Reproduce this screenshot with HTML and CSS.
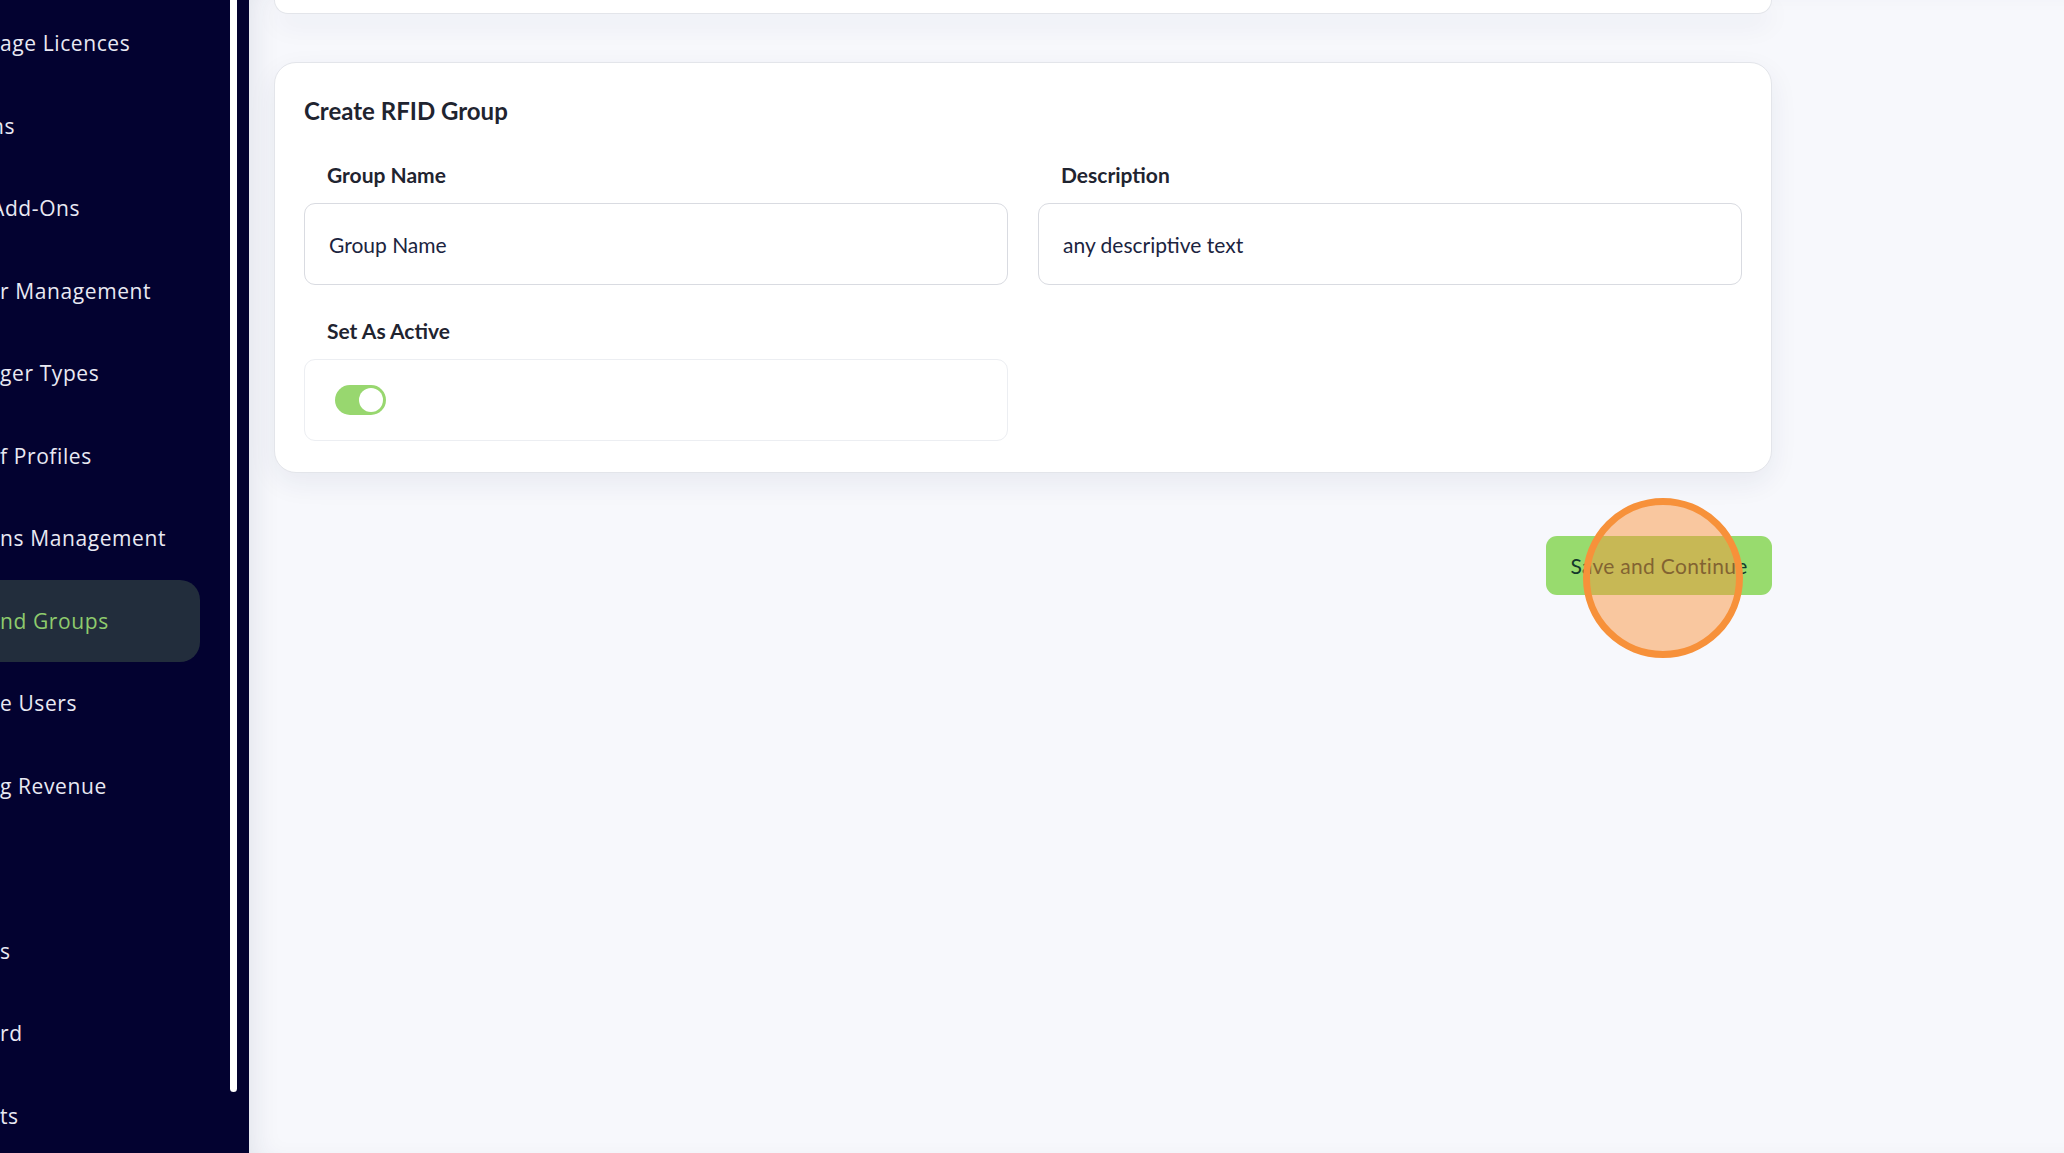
FILE: index.html
```html
<!DOCTYPE html>
<html lang="en">
<head>
<meta charset="utf-8">
<title>Create RFID Group</title>
<link rel="stylesheet" href="styles.css">
</head>
<body>
<div class="app">
  <aside class="sidebar">
    <nav class="nav">
      <a class="nav-item"><span class="nav-label">age Licences</span></a>
      <a class="nav-item"><span class="nav-label shift">ns</span></a>
      <a class="nav-item"><span class="nav-label shift">Add-Ons</span></a>
      <a class="nav-item"><span class="nav-label">r Management</span></a>
      <a class="nav-item"><span class="nav-label">ger Types</span></a>
      <a class="nav-item"><span class="nav-label">f Profiles</span></a>
      <a class="nav-item"><span class="nav-label">ns Management</span></a>
      <a class="nav-item active"><span class="nav-label">nd Groups</span></a>
      <a class="nav-item"><span class="nav-label">e Users</span></a>
      <a class="nav-item"><span class="nav-label">g Revenue</span></a>
      <a class="nav-item"><span class="nav-label"></span></a>
      <a class="nav-item"><span class="nav-label">s</span></a>
      <a class="nav-item"><span class="nav-label">rd</span></a>
      <a class="nav-item"><span class="nav-label">ts</span></a>
    </nav>
    <div class="scroll-track"><div class="scroll-thumb"></div></div>
  </aside>

  <main class="main">
    <div class="card card-top"></div>

    <section class="card form-card">
      <h2 class="card-title">Create RFID Group</h2>
      <div class="form-grid">
        <div class="field">
          <label class="field-label">Group Name</label>
          <div class="input">Group Name</div>
        </div>
        <div class="field">
          <label class="field-label">Description</label>
          <div class="input">any descriptive text</div>
        </div>
        <div class="field">
          <label class="field-label">Set As Active</label>
          <div class="input input-soft">
            <span class="toggle"><span class="knob"></span></span>
          </div>
        </div>
      </div>
    </section>

    <div class="actions">
      <div class="btn-wrap">
        <button class="btn-primary">Save and Continue</button>
        <span class="click-marker"></span>
      </div>
    </div>
  </main>
</div>
</body>
</html>
```

FILE: styles.css
```css
* { box-sizing: border-box; }

html, body {
  margin: 0;
  padding: 0;
  height: 100%;
}

body {
  font-family: "Lato", "Open Sans", sans-serif;
  background: #f7f8fc;
  overflow: hidden;
}

.app {
  display: flex;
  height: 1153px;
}

/* Sidebar */
.sidebar {
  width: 249px;
  flex: 0 0 249px;
  background: #030230;
  display: flex;
  overflow: hidden;
}

.nav {
  flex: 1;
  display: flex;
  flex-direction: column;
  padding-top: 2px;
  overflow: hidden;
}

.nav-item {
  height: 82.5px;
  flex: 0 0 82.5px;
  width: 200px;
  display: flex;
  align-items: center;
  color: #e9e9f3;
  font-family: "Open Sans", sans-serif;
  font-size: 21px;
  letter-spacing: 0.6px;
  white-space: nowrap;
  text-decoration: none;
}

.nav-label.shift { margin-left: -9px; }

.nav-item.active {
  background: #222d3c;
  border-radius: 0 20px 20px 0;
  color: #8ecb6d;
}

.scroll-track {
  width: 7px;
  margin-right: 12px;
  flex: 0 0 7px;
}

.scroll-thumb {
  height: 1092px;
  background: #ffffff;
  border-radius: 0 0 4px 4px;
}

/* Main */
.main {
  flex: 1;
  padding: 0 0 0 25px;
  background: #f7f8fc;
  box-shadow: inset 18px 0 28px -14px rgba(30, 40, 80, 0.10);
  display: flex;
  flex-direction: column;
}

.card {
  width: 1498px;
  background: #ffffff;
  border: 1px solid #e3e5ea;
  box-shadow: 0 10px 28px rgba(30, 40, 80, 0.07);
}

.card-top {
  height: 14px;
  border-top: none;
  border-radius: 0 0 20px 20px;
}

.form-card {
  margin-top: 48px;
  border-radius: 22px;
  padding: 33px 29px 31px;
}

.card-title {
  margin: 0 0 37px;
  font-size: 24px;
  line-height: 29px;
  font-weight: 700;
  color: #1f2430;
}

.form-grid {
  display: grid;
  grid-template-columns: 1fr 1fr;
  column-gap: 30px;
  row-gap: 33px;
}

.field-label {
  display: block;
  padding-left: 23px;
  margin-bottom: 16px;
  font-size: 21px;
  line-height: 25px;
  font-weight: 700;
  color: #1f2430;
}

.input {
  height: 82px;
  border: 1px solid #d9dbe1;
  border-radius: 11px;
  padding: 0 24px;
  display: flex;
  align-items: center;
  font-size: 21px;
  color: #1b2440;
}

.input-soft {
  border-color: #eceef2;
  padding-left: 30px;
}

.toggle {
  width: 51px;
  height: 30px;
  border-radius: 15px;
  background: #98d76f;
  display: flex;
  align-items: center;
  justify-content: flex-end;
  padding-right: 3px;
}

.knob {
  width: 24px;
  height: 24px;
  border-radius: 50%;
  background: #ffffff;
}

/* Actions */
.actions {
  width: 1498px;
  display: flex;
  justify-content: flex-end;
  margin-top: 63px;
}

.btn-wrap {
  position: relative;
}

.btn-primary {
  width: 226px;
  height: 59px;
  border: none;
  border-radius: 11px;
  background: #98db6e;
  color: #12382b;
  font-family: "Lato", sans-serif;
  font-size: 21px;
  letter-spacing: 0.3px;
  cursor: pointer;
}

.click-marker {
  position: absolute;
  left: 37px;
  top: -38px;
  width: 160px;
  height: 160px;
  border-radius: 50%;
  border: 7px solid #f7913a;
  background: rgba(251, 147, 58, 0.48);
  pointer-events: none;
}
```
